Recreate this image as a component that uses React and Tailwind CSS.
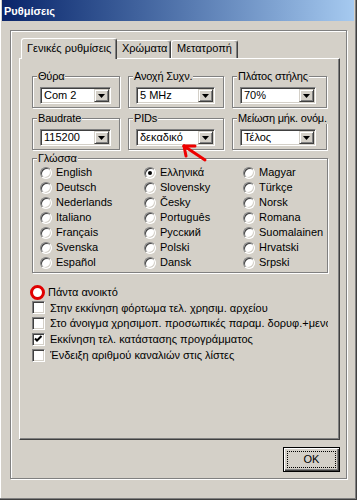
import React from 'react';

const languages = [
  ['English', 'Ελληνικά', 'Magyar'],
  ['Deutsch', 'Slovensky', 'Türkçe'],
  ['Nederlands', 'Česky', 'Norsk'],
  ['Italiano', 'Português', 'Romana'],
  ['Français', 'Русский', 'Suomalainen'],
  ['Svenska', 'Polski', 'Hrvatski'],
  ['Español', 'Dansk', 'Srpski'],
];

const options = [
  { label: 'Στην εκκίνηση φόρτωμα τελ. χρησιμ. αρχείου', checked: false },
  { label: 'Στο άνοιγμα χρησιμοπ. προσωπικές παραμ. δορυφ.+μενού', checked: false },
  { label: 'Εκκίνηση τελ. κατάστασης προγράμματος', checked: true },
  { label: 'Ένδειξη αριθμού καναλιών στις λίστες', checked: false },
];

function Group({ label, className, children }) {
  return (
    <fieldset className={`min-w-0 border border-[#808080] shadow-[1px_1px_0_#fff,inset_1px_1px_0_#fff] ${className}`}>
      <legend className="-ml-[3px] px-[1px] leading-[12px] whitespace-nowrap tracking-[-0.2px] bg-[#d4d0c8]">{label}</legend>
      {children}
    </fieldset>
  );
}

function Combo({ value, width }) {
  return (
    <div
      className="flex h-[17px] p-[1px] bg-white border border-t-[#808080] border-l-[#808080] border-r-white border-b-white shadow-[inset_1px_1px_0_#404040,inset_-1px_-1px_0_#d4d0c8]"
      style={{ width }}
    >
      <span className="flex-1 pl-[2px] leading-[13px] whitespace-nowrap overflow-hidden">{value}</span>
      <span className="w-[15px] h-[13px] flex items-center justify-center bg-[#d4d0c8] border border-t-[#d4d0c8] border-l-[#d4d0c8] border-r-[#404040] border-b-[#404040] shadow-[inset_1px_1px_0_#fff,inset_-1px_-1px_0_#808080]">
        <svg width="7" height="4" viewBox="0 0 7 4">
          <polygon points="0,0 7,0 3.5,4" fill="#000" />
        </svg>
      </span>
    </div>
  );
}

function Radio({ checked }) {
  return (
    <span className="w-[12px] h-[12px] shrink-0 flex items-center justify-center rounded-full bg-white border border-t-[#808080] border-l-[#808080] border-r-white border-b-white shadow-[inset_1px_1px_0_#404040,inset_-1px_-1px_0_#d4d0c8]">
      {checked && <span className="w-[4px] h-[4px] rounded-full bg-black" />}
    </span>
  );
}

function Checkbox({ checked }) {
  return (
    <span className="w-[13px] h-[13px] shrink-0 bg-white border border-t-[#808080] border-l-[#808080] border-r-white border-b-white shadow-[inset_1px_1px_0_#404040,inset_-1px_-1px_0_#d4d0c8]">
      {checked && (
        <svg width="11" height="11" viewBox="0 0 11 11">
          <polyline points="2,4.5 4,6.5 8.5,2" fill="none" stroke="#000" strokeWidth="2" />
        </svg>
      )}
    </span>
  );
}

export default function App() {
  return (
    <div className="relative w-[357px] h-[500px] overflow-hidden bg-[#d4d0c8] pl-[2px] pr-[2px] border-r border-b border-[#404040] shadow-[inset_-1px_-1px_0_#808080,inset_1px_0_0_#fff] text-[11px] text-black font-['Liberation_Sans',Arial,sans-serif]">
      {/* Title bar */}
      <div className="h-[21px] flex items-center pl-[2px] pt-[1px] bg-gradient-to-r from-[#0a246a] to-[#a6caf0] text-white font-bold">
        Ρυθμίσεις
      </div>

      {/* Outer frame */}
      <div className="ml-[8px] mt-[9px] w-[337px] h-[449px] border border-[#808080] shadow-[1px_1px_0_#fff,inset_1px_1px_0_#fff] pl-[8px] pt-[7px]">
        {/* Tabs */}
        <div className="relative z-10 flex items-end h-[20px]">
          <div className="ml-[2px] w-[96px] h-[21px] -mb-[1px] pl-[5px] pt-[3px] leading-[13px] whitespace-nowrap bg-[#d4d0c8] rounded-t-[3px] border-t border-l border-r border-t-white border-l-white border-r-[#404040] shadow-[inset_-1px_0_0_#808080]">
            Γενικές ρυθμίσεις
          </div>
          <div className="w-[54px] h-[18px] pl-[5px] pt-[1px] leading-[13px] whitespace-nowrap rounded-tr-[3px] border-t border-r border-t-white border-r-[#404040] shadow-[inset_-1px_0_0_#808080]">
            Χρώματα
          </div>
          <div className="w-[67px] h-[18px] pl-[5px] pt-[1px] leading-[13px] whitespace-nowrap rounded-t-[3px] border-t border-l border-r border-t-white border-l-white border-r-[#404040] shadow-[inset_-1px_0_0_#808080]">
            Μετατροπή
          </div>
        </div>

        {/* Tab page */}
        <div className="w-[321px] h-[382px] pl-[12px] pt-[11px] border border-t-white border-l-white border-r-[#404040] border-b-[#404040] shadow-[inset_-1px_-1px_0_#808080]">
          <div className="flex gap-[8px]">
            <Group label="Θύρα" className="w-[88px] pl-[7px] pt-[5px] pb-[3px]">
              <Combo value="Com 2" width={71} />
            </Group>
            <Group label="Ανοχή Συχν." className="w-[96px] pl-[7px] pt-[5px] pb-[3px]">
              <Combo value="5 MHz" width={79} />
            </Group>
            <Group label="Πλάτος στήλης" className="w-[95px] pl-[7px] pt-[5px] pb-[3px]">
              <Combo value="70%" width={76} />
            </Group>
          </div>
          <div className="flex gap-[8px] mt-[4px]">
            <Group label="Baudrate" className="w-[88px] pl-[7px] pt-[5px] pb-[3px]">
              <Combo value="115200" width={71} />
            </Group>
            <Group label="PIDs" className="w-[96px] pl-[7px] pt-[5px] pb-[3px]">
              <Combo value="δεκαδικό" width={79} />
            </Group>
            <Group label="Μείωση μήκ. ονόμ." className="w-[95px] pl-[7px] pt-[5px] pb-[3px]">
              <Combo value="Τέλος" width={76} />
            </Group>
          </div>

          <Group label="Γλώσσα" className="mt-[2px] w-[296px] pl-[7px] pt-[1px] pb-[2px]">
            <div className="grid grid-cols-[104px_99px_1fr]">
              {languages.map((row) =>
                row.map((lang) => (
                  <div key={lang} className="h-[15px] flex items-center gap-[4px] whitespace-nowrap">
                    <Radio checked={lang === 'Ελληνικά'} />
                    <span>{lang}</span>
                  </div>
                ))
              )}
            </div>
          </Group>

          {/* Options */}
          <div className="mt-[11px] w-[296px]">
            <div className="h-[16px] flex items-center gap-[3px] -ml-[2px]">
              <span className="w-[15px] h-[15px] shrink-0 rounded-full bg-white border-[3px] border-[#e00000]" />
              <span className="whitespace-nowrap">Πάντα ανοικτό</span>
            </div>
            {options.map((opt) => (
              <div key={opt.label} className="h-[15.75px] flex items-center gap-[5px]">
                <Checkbox checked={opt.checked} />
                <span className="flex-1 min-w-0 overflow-hidden whitespace-nowrap">{opt.label}</span>
              </div>
            ))}
          </div>
        </div>

        {/* Buttons */}
        <div className="w-[321px] mt-[7px] flex justify-end">
          <button className="w-[57px] h-[25px] p-[3px] bg-[#d4d0c8] border border-black shadow-[inset_1px_1px_0_#fff,inset_-1px_-1px_0_#404040,inset_-2px_-2px_0_#808080]">
            <span className="flex h-full items-center justify-center border border-dotted border-black">OK</span>
          </button>
        </div>
      </div>

      {/* Red annotation arrow */}
      <svg className="absolute left-[178px] top-[140px]" width="32" height="26" viewBox="0 0 32 26">
        <g stroke="#ee0000" strokeWidth="3" strokeLinecap="round" fill="none">
          <line x1="6" y1="6" x2="27" y2="20" />
          <line x1="6" y1="6" x2="17" y2="6" />
          <line x1="6" y1="6" x2="8" y2="16" />
        </g>
      </svg>
    </div>
  );
}
